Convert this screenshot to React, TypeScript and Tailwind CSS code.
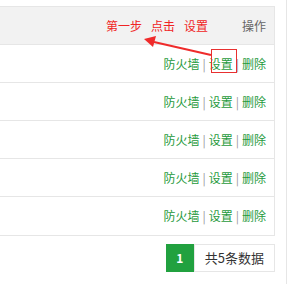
import React from 'react';

const rows = [1, 2, 3, 4, 5];

function Actions() {
  return (
    <div className="text-[12px] leading-none text-[#1f9a3c]">
      <span>防火墙</span>
      <span className="mx-[3px] text-[#999]">|</span>
      <span>设置</span>
      <span className="mx-[3px] text-[#999]">|</span>
      <span>删除</span>
    </div>
  );
}

export default function App() {
  return (
    <div
      className="relative w-[291px] h-[284px] bg-white"
      style={{ fontFamily: '"Noto Sans CJK SC", "Noto Sans", sans-serif' }}
    >
      <div className="w-[287px] h-[284px] border-r border-[#e6e6e6] pt-[6px]">
        <div className="w-[275px] border-t border-r border-b border-[#e6e6e6]">
          <div className="h-[38px] bg-[#f2f2f2] flex items-center justify-end pr-[8px] text-[12px] text-[#666] border-b border-[#e6e6e6]">
            操作
          </div>
          {rows.map((r, i) => (
            <div
              key={r}
              className={`h-[38px] flex items-center justify-end pr-[8px] ${
                i < rows.length - 1 ? 'border-b border-[#e6e6e6]' : ''
              }`}
            >
              <Actions />
            </div>
          ))}
        </div>

        <div className="w-[275px] flex justify-end mt-[8px]">
          <div className="w-[28px] h-[28px] bg-[#21a13f] text-white text-[12px] font-bold flex items-center justify-center">
            1
          </div>
          <div className="h-[28px] px-[10px] border border-[#e6e6e6] flex items-center text-[13px] text-[#333]">
            共5条数据
          </div>
        </div>
      </div>

      {/* annotation overlay */}
      <div className="absolute left-[106px] top-[19px] flex gap-[9px] text-[12px] leading-[14px] text-[#f02424]">
        <span>第一步</span>
        <span>点击</span>
        <span>设置</span>
      </div>
      <div className="absolute left-[211px] top-[49px] w-[26px] h-[24px] border border-[#e83030]" />
      <svg
        className="absolute left-0 top-0"
        width="291"
        height="284"
        viewBox="0 0 291 284"
      >
        <line x1="211" y1="55" x2="154" y2="42" stroke="#ef2b2b" strokeWidth="2" />
        <polygon points="144,39 156,36 153,47" fill="#ef2b2b" />
      </svg>
    </div>
  );
}
